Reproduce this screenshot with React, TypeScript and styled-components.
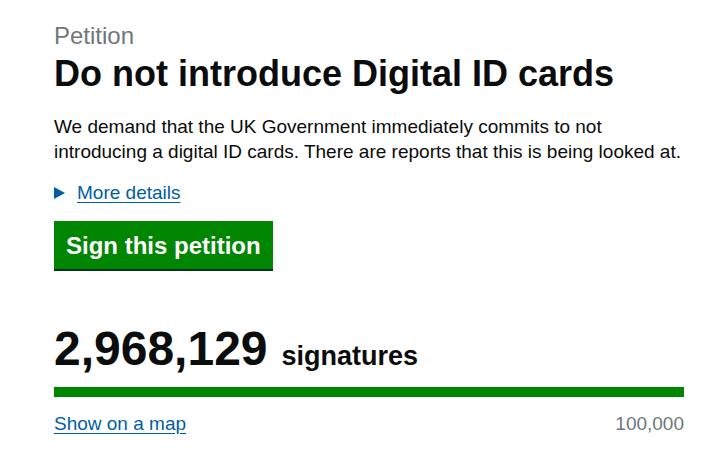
import React from 'react'
import styled, { createGlobalStyle } from 'styled-components'

const GlobalStyle = createGlobalStyle`
  body {
    margin: 0;
    background: #ffffff;
    font-family: "Liberation Sans", Arial, sans-serif;
    color: #0b0c0c;
  }
`

const Page = styled.main`
  width: 630px;
  padding: 21px 0 0 54px;
`

const Caption = styled.span`
  display: block;
  font-size: 24px;
  line-height: 30px;
  color: #6f777b;
`

const Heading = styled.h1`
  margin: 0 0 17px;
  font-size: 36px;
  line-height: 46px;
  font-weight: 700;
`

const Lead = styled.p`
  margin: 0 0 16px;
  font-size: 19px;
  line-height: 25px;
`

const Details = styled.div`
  display: flex;
  align-items: center;
  gap: 12px;
  margin-bottom: 16px;
  font-size: 19px;
  line-height: 25px;
`

const Arrow = styled.span`
  width: 0;
  height: 0;
  border-top: 6px solid transparent;
  border-bottom: 6px solid transparent;
  border-left: 11px solid #005ea5;
`

const Link = styled.a`
  color: #005ea5;
  text-decoration: underline;
  text-underline-offset: 3px;
  font-size: 19px;
  cursor: pointer;
`

const SignButton = styled.button`
  display: block;
  border: none;
  margin: 0 0 54px;
  padding: 9px 12px 8px;
  background: #008600;
  box-shadow: 0 2px 0 #003618;
  color: #ffffff;
  font-family: inherit;
  font-size: 24px;
  line-height: 31px;
  font-weight: 700;
  cursor: pointer;
`

const Count = styled.div`
  display: flex;
  align-items: baseline;
  gap: 14px;
  margin-bottom: 12px;
`

const Number = styled.span`
  font-size: 48px;
  line-height: 52px;
  font-weight: 700;
`

const Unit = styled.span`
  font-size: 27px;
  font-weight: 700;
`

const Bar = styled.div`
  height: 10px;
  background: #008600;
  margin-bottom: 14px;
`

const Fill = styled.div`
  height: 100%;
  background: #008600;
`

const Footer = styled.div`
  display: flex;
  justify-content: space-between;
  align-items: baseline;
  font-size: 19px;
  line-height: 25px;
`

const Target = styled.span`
  color: #6f777b;
`

export default function App() {
  const signatures = 2968129
  const target = 100000
  const pct = Math.min(100, (signatures / target) * 100)

  return (
    <>
      <GlobalStyle />
      <Page>
        <Caption>Petition</Caption>
        <Heading>Do not introduce Digital ID cards</Heading>
        <Lead>
          We demand that the UK Government immediately commits to not introducing a digital ID cards.
          There are reports that this is being looked at.
        </Lead>
        <Details>
          <Arrow />
          <Link>More details</Link>
        </Details>
        <SignButton>Sign this petition</SignButton>
        <Count>
          <Number>{signatures.toLocaleString('en-GB')}</Number>
          <Unit>signatures</Unit>
        </Count>
        <Bar>
          <Fill style={{ width: `${pct}%` }} />
        </Bar>
        <Footer>
          <Link>Show on a map</Link>
          <Target>{target.toLocaleString('en-GB')}</Target>
        </Footer>
      </Page>
    </>
  )
}
